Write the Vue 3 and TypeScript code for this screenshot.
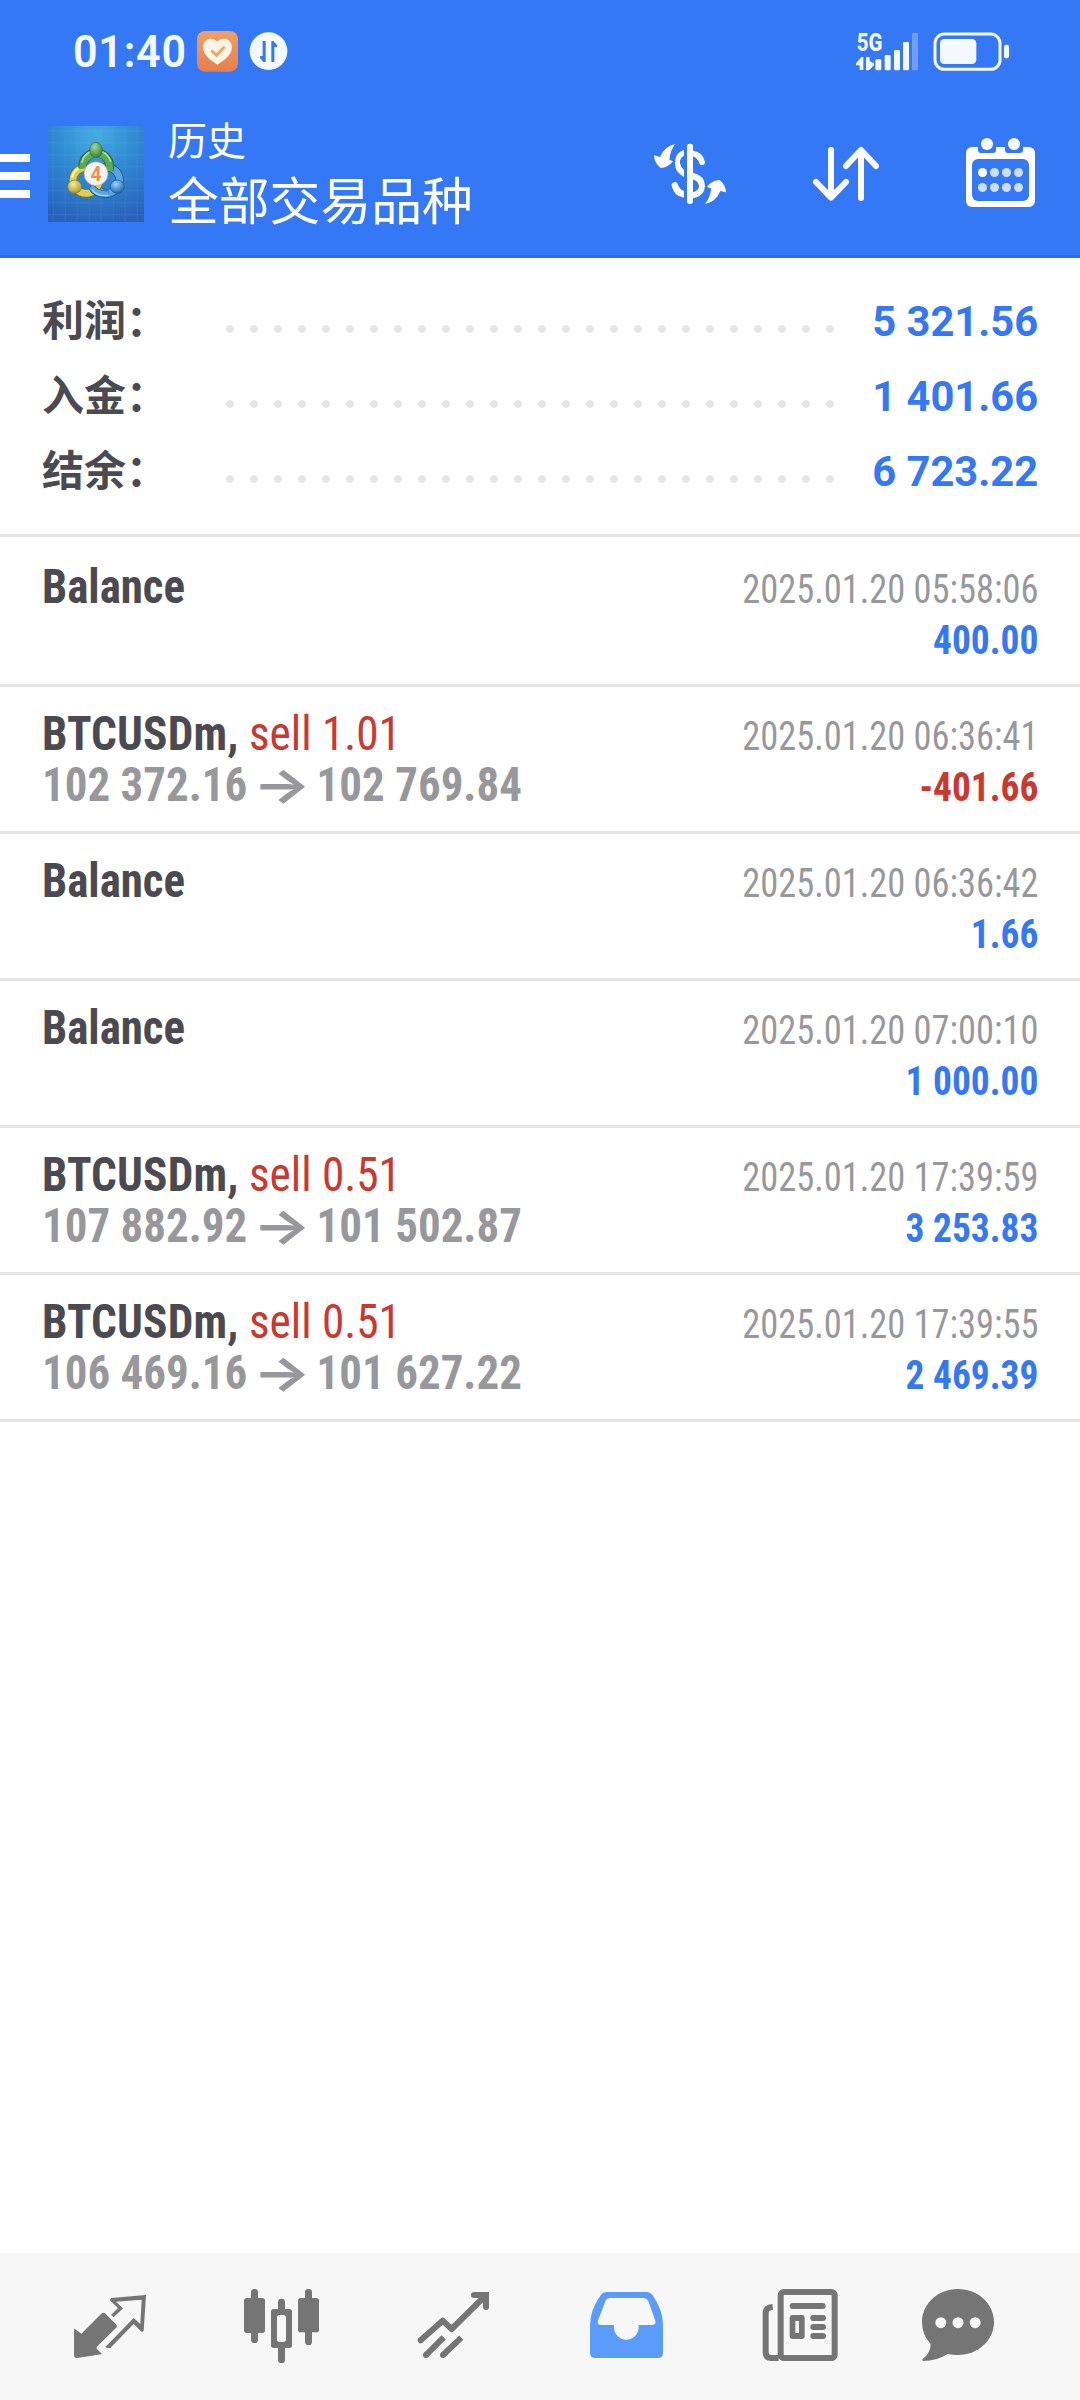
<script setup lang="ts">
interface SummaryLine {
  label: string
  value: string
}

interface HistoryRow {
  title: string
  side?: string
  open?: string
  close?: string
  time: string
  amount: string
  loss?: boolean
}

const summary: SummaryLine[] = [
  { label: '利润：', value: '5 321.56' },
  { label: '入金：', value: '1 401.66' },
  { label: '结余：', value: '6 723.22' },
]

const rows: HistoryRow[] = [
  { title: 'Balance', time: '2025.01.20 05:58:06', amount: '400.00' },
  { title: 'BTCUSDm,', side: 'sell 1.01', open: '102 372.16', close: '102 769.84', time: '2025.01.20 06:36:41', amount: '-401.66', loss: true },
  { title: 'Balance', time: '2025.01.20 06:36:42', amount: '1.66' },
  { title: 'Balance', time: '2025.01.20 07:00:10', amount: '1 000.00' },
  { title: 'BTCUSDm,', side: 'sell 0.51', open: '107 882.92', close: '101 502.87', time: '2025.01.20 17:39:59', amount: '3 253.83' },
  { title: 'BTCUSDm,', side: 'sell 0.51', open: '106 469.16', close: '101 627.22', time: '2025.01.20 17:39:55', amount: '2 469.39' },
]
</script>

<template>
  <div class="screen">
    <header class="top">
      <div class="status">
        <span class="clock">01:40</span>
        <svg class="heart" width="41" height="41" viewBox="591 93 123 123">
          <defs>
            <linearGradient id="orange" x1="0" y1="0" x2="0" y2="1">
              <stop offset="0" stop-color="#efa066" />
              <stop offset="1" stop-color="#e67f4b" />
            </linearGradient>
          </defs>
          <rect x="591" y="93" width="123" height="122" rx="24" fill="url(#orange)" />
          <path d="M652 194C640 186 609 168 609 142C609 116 640 108 652 126C664 108 696 116 696 142C696 168 664 186 652 194Z" fill="#fff4e6" />
          <path d="M637 154L650 166L671 143" fill="none" stroke="#eda869" stroke-width="9" stroke-linecap="round" />
        </svg>
        <svg class="sync" width="39" height="39" viewBox="747 96 117 117">
          <circle cx="805.500" cy="153.500" r="56.500" fill="#f4f8ff" />
          <path d="M788 123H797V186H790L780 174V168H788ZM814 186V123H820L831 135V141H823V186Z" fill="#3478f6" />
        </svg>
        <svg class="signal" width="64" height="40" viewBox="105 60 192 120">
          <text x="110" y="121" class="net" textLength="77" lengthAdjust="spacingAndGlyphs">5G</text>
          <g fill="#f4f8ff">
            <path d="M130 138V177H119V163H108V157L124 138ZM138 138H149V150L162 157V163L147 178H138Z" />
            <rect x="166" y="145" width="18" height="33" rx="4" />
            <rect x="194" y="132" width="18" height="46" rx="4" />
            <rect x="222" y="117" width="18" height="61" rx="4" />
            <rect x="249" y="93" width="18" height="85" rx="4" />
            <rect x="276" y="65" width="18" height="113" rx="4" opacity=".3" />
          </g>
        </svg>
        <svg width="77" height="40" viewBox="339 60 231 120">
          <rect x="345" y="69" width="195" height="106" rx="28" fill="none" stroke="#f4f8ff" stroke-width="9" />
          <rect x="360" y="84" width="109" height="75" rx="13" fill="#f4f8ff" />
          <rect x="552" y="101" width="15" height="41" rx="6" fill="#f4f8ff" />
        </svg>
      </div>

      <div class="bar">
        <svg class="burger" width="30" height="44" viewBox="0 0 30 44" fill="#fff">
          <rect width="30" height="8" />
          <rect y="18" width="30" height="8" />
          <rect y="36" width="30" height="8" />
        </svg>
        <svg class="logo" width="96" height="96" viewBox="144 378 288 288">
          <defs>
            <radialGradient id="sky" cx=".5" cy=".08" r=".95">
              <stop offset="0" stop-color="#45abe2" />
              <stop offset=".5" stop-color="#2f86d0" />
              <stop offset="1" stop-color="#2862b8" />
            </radialGradient>
            <pattern id="mesh" x="158" y="391" width="36" height="36" patternUnits="userSpaceOnUse">
              <path d="M0 1H36M1 0V36" stroke="#7cc4ee" stroke-opacity=".18" stroke-width="2" />
            </pattern>
            <radialGradient id="green" cx=".4" cy=".3" r=".7">
              <stop offset="0" stop-color="#a5d992" />
              <stop offset="1" stop-color="#34853a" />
            </radialGradient>
            <radialGradient id="yellow" cx=".4" cy=".3" r=".7">
              <stop offset="0" stop-color="#f6ec98" />
              <stop offset="1" stop-color="#a9982b" />
            </radialGradient>
            <radialGradient id="azure" cx=".4" cy=".3" r=".7">
              <stop offset="0" stop-color="#a3d6f5" />
              <stop offset="1" stop-color="#1c66b0" />
            </radialGradient>
          </defs>
          <rect x="144" y="378" width="288" height="288" fill="url(#sky)" />
          <rect x="144" y="378" width="288" height="288" fill="url(#mesh)" />
          <g fill="none">
            <circle cx="320" cy="541" r="39" stroke="#1b5594" stroke-width="25" />
            <circle cx="320" cy="541" r="39" stroke="#5aa6de" stroke-width="20" />
            <circle cx="258" cy="541" r="39" stroke="#82741d" stroke-width="25" />
            <circle cx="258" cy="541" r="39" stroke="#e0d052" stroke-width="20" />
            <path d="M216 532A42 42 0 0 1 252 499" stroke="#fbf5b5" stroke-width="6" />
            <path d="M249 504A40 40 0 1 1 327 510" stroke="#2a6b30" stroke-width="27" />
            <path d="M249 506A40 40 0 1 1 327 512" stroke="#5cab54" stroke-width="21" />
            <path d="M246 488A46 46 0 0 1 270 455M307 455A46 46 0 0 1 332 485" stroke="#b5dfa6" stroke-width="5" />
            <path d="M274 560Q288 585 326 582" stroke="#1b5594" stroke-width="22" />
            <path d="M274 560Q288 585 326 582" stroke="#5aa6de" stroke-width="17" />
            <path d="M276 568Q292 591 326 586" stroke="#b4dcf4" stroke-width="4" />
          </g>
          <ellipse cx="288" cy="450" rx="19" ry="23" fill="url(#green)" stroke="#2f7335" stroke-width="2" />
          <ellipse cx="224" cy="560" rx="21" ry="20" fill="url(#yellow)" stroke="#85771d" stroke-width="2" />
          <ellipse cx="352" cy="560" rx="21" ry="20" fill="url(#azure)" stroke="#1b5c9e" stroke-width="2" />
          <circle cx="288" cy="521" r="36" fill="#f2f2f4" stroke="#9c9c92" stroke-width="2" />
          <text x="288" y="542" class="four">4</text>
        </svg>
        <div class="titles">
          <div class="section">历史</div>
          <div class="filter">全部交易品种</div>
        </div>
        <div class="actions">
          <svg width="74" height="71" viewBox="39 51 222 213" fill="#fff">
            <rect x="141" y="71" width="18" height="181" rx="8" />
            <path d="M132 90V107Q118 114 120 130Q122 143 132 150V171Q105 158 105 130Q105 98 132 90Z" />
            <path d="M159 92Q188 96 194 123A8.500 8.500 0 0 1 178 130Q172 113 159 109Z" />
            <path d="M159 158Q195 167 195 198Q193 229 159 235V217Q177 211 177 198Q176 184 159 178Z" />
            <path d="M132 233Q102 228 96 200A9 9 0 0 1 113 192Q118 208 132 213Z" />
            <path d="M105 72Q91 91 88 119L99 124Q84 143 62 144Q43 130 42 106L60 111Q73 79 105 72Z" />
            <path d="M195 252Q210 232 214 206L201 200Q218 180 239 180Q258 197 258 217L241 213Q228 246 195 252Z" />
          </svg>
          <svg width="68" height="71" viewBox="516 51 204 213" fill="none" stroke="#fff" stroke-width="18" stroke-linecap="round" stroke-linejoin="round">
            <path d="M573 90V232M528 186L573 233L618 186" />
            <path d="M663 234V91M618 138L663 90L708 138" />
          </svg>
          <svg width="71" height="71" viewBox="975 51 213 213">
            <rect x="978" y="81" width="207" height="180" rx="18" fill="#fff" />
            <path d="M1014 81H1068V90Q1068 99 1059 99H1023Q1014 99 1014 90ZM1095 81H1149V90Q1149 99 1140 99H1104Q1095 99 1095 90Z" fill="#3478f6" />
            <rect x="996" y="117" width="171" height="126" rx="18" fill="#3478f6" />
            <circle cx="1041" cy="72" r="18" fill="#fff" />
            <circle cx="1122" cy="72" r="18" fill="#fff" />
            <circle cx="1027.500" cy="157.500" r="13.500" fill="#fff" />
            <g fill="#cddffd">
              <circle v-for="n in 3" :key="'a' + n" :cx="1027.5 + n * 36" cy="157.500" r="13.500" />
              <circle v-for="n in 4" :key="'b' + n" :cx="991.5 + n * 36" cy="202.500" r="13.500" />
            </g>
          </svg>
        </div>
      </div>
    </header>

    <section class="summary">
      <div v-for="line in summary" :key="line.label" class="sum-line">
        <span class="sum-label">{{ line.label }}</span>
        <span class="leader"></span>
        <span class="sum-value">{{ line.value }}</span>
      </div>
    </section>

    <main class="history">
      <article v-for="row in rows" :key="row.time" class="row">
        <div class="left">
          <div class="line" :class="{ trade: row.side }"><b>{{ row.title }}</b><span v-if="row.side" class="side">{{ ' ' + row.side }}</span></div>
          <div v-if="row.open" class="prices"><span>{{ row.open }}</span><span class="arrow">→</span><span>{{ row.close }}</span></div>
        </div>
        <div class="right">
          <div class="time">{{ row.time }}</div>
          <div class="amount" :class="{ loss: row.loss }">{{ row.amount }}</div>
        </div>
      </article>
    </main>

    <nav class="tabs">
      <svg width="74" height="76" viewBox="219 144 222 228">
        <path d="M315 220Q309 216 303 222L244 281L224 266H222V346Q222 354 231 354L304 343V340L290 326V321L350 262Q352 258 348 253Z" fill="#757575" />
        <path d="M316 321L322 324H331L401 252L422 273Q427 277 431 273L438 165L334 174Q328 177 331 182L354 204L333 225L341 232L369 205L348 185L425 179L421 252L401 234Z" fill="#757575" />
      </svg>
      <svg width="77" height="76" viewBox="729 144 231 228" fill="#757575">
        <rect x="753" y="147" width="21" height="162" rx="10" />
        <rect x="732" y="174" width="63" height="105" rx="8" />
        <rect x="915" y="147" width="21" height="168" rx="10" />
        <rect x="894" y="174" width="63" height="103" rx="8" />
        <rect x="834" y="176" width="21" height="193" rx="10" />
        <rect x="813" y="207" width="63" height="117" rx="8" />
        <rect x="831" y="225" width="27" height="81" rx="8" fill="#f7f7f7" />
      </svg>
      <svg width="73" height="76" viewBox="171 144 219 228" fill="none" stroke="#757575" stroke-width="18">
        <path d="M182 301L248 242L275 267L376 167" stroke-linecap="round" stroke-linejoin="round" />
        <path d="M342 165H378V201" stroke-linecap="round" />
        <path d="M369 156H380Q387 156 387 163V174H369Z" fill="#757575" stroke="none" />
        <path d="M251 292L198 345M304 293L249 345" />
        <circle cx="198" cy="345" r="9" fill="#757575" stroke="none" />
        <circle cx="249" cy="345" r="9" fill="#757575" stroke="none" />
      </svg>
      <svg width="75" height="76" viewBox="687 144 225 228">
        <path fill-rule="evenodd" d="M739 156H861Q871 156 877 164Q909 210 909 254V339Q909 354 894 354H705Q690 354 690 339V254Q690 210 723 164Q729 156 739 156ZM750 174Q740 174 736 184L714 242Q711 255 724 255H762V262A37 37 0 0 0 836 262V255H876Q888 255 886 242L865 184Q860 174 848 174Z" fill="#5b9bfa" />
      </svg>
      <svg width="78" height="76" viewBox="123 144 234 228">
        <rect x="182" y="156" width="162" height="198" rx="10" fill="none" stroke="#757575" stroke-width="18" />
        <path d="M158 201Q137 202 137 219V337Q137 354 154 354H176" fill="none" stroke="#757575" stroke-width="18" />
        <g fill="#757575">
          <rect x="209" y="189" width="108" height="18" rx="9" />
          <rect x="209" y="225" width="45" height="72" rx="9" />
          <rect x="271" y="225" width="47" height="18" rx="9" />
          <rect x="271" y="252" width="47" height="18" rx="9" />
          <rect x="271" y="279" width="47" height="18" rx="9" />
        </g>
        <rect x="226" y="243" width="11" height="36" fill="#f7f7f7" />
      </svg>
      <svg width="74" height="76" viewBox="603 144 222 228">
        <path d="M714 147C774 147 822 191 822 246C822 301 774 345 714 345Q698 345 683 342Q650 363 610 363Q604 361 608 357Q632 340 632 312Q606 284 606 246C606 191 654 147 714 147Z" fill="#757575" />
        <g fill="#f7f7f7">
          <circle cx="662.500" cy="248" r="16.500" />
          <circle cx="714" cy="248" r="16.500" />
          <circle cx="765.500" cy="248" r="16.500" />
        </g>
      </svg>
    </nav>
  </div>
</template>

<style>
body {
  margin: 0;
  background: #fff;
}
</style>

<style scoped>
.screen {
  width: 1080px;
  height: 2400px;
  display: flex;
  flex-direction: column;
  background: #fff;
  overflow: hidden;
  font-family: Roboto, 'Noto Sans CJK SC', sans-serif;
}
svg {
  display: block;
  flex: none;
}
.top {
  height: 255px;
  flex: none;
  background: #3478f6;
  border-bottom: 3px solid #2f6bdc;
}
.status {
  height: 71px;
  padding: 31px 70px 0 73px;
  display: flex;
  align-items: flex-start;
}
.clock {
  width: 124px;
  font-size: 45px;
  line-height: 41px;
  font-weight: 600;
  letter-spacing: 0.8px;
  color: #f4f8ff;
  transform: scaleX(0.955);
  transform-origin: left;
}
.sync {
  margin: 1px auto 0 11px;
}
.signal {
  margin-right: 14px;
  overflow: visible;
}
.net {
  font: 800 77px Roboto, sans-serif;
  fill: #f4f8ff;
}
.bar {
  display: flex;
  align-items: flex-start;
}
.burger {
  margin-top: 52px;
}
.logo {
  margin: 24px 24px 0 18px;
}
.four {
  font: 700 58px Roboto, sans-serif;
  fill: #ef9540;
  text-anchor: middle;
}
.titles {
  margin-top: 15px;
  color: #fff;
  white-space: nowrap;
}
.section {
  font-size: 39px;
  line-height: 50px;
}
.filter {
  font-size: 50.8px;
  line-height: 71px;
}
.actions {
  display: flex;
  gap: 85px;
  margin: 35px 44px 0 auto;
}
.summary {
  flex: none;
  padding: 26px 42px 25px;
  border-bottom: 3px solid #e5e5e5;
}
.sum-line {
  height: 75px;
  display: flex;
  font-size: 42px;
  line-height: 75px;
  font-weight: 700;
}
.sum-label {
  width: 176px;
  color: #4b4a50;
}
.leader {
  width: 624px;
  background: radial-gradient(circle at 12px 45px, #e5e5e5 3.5px, transparent 4.3px) 0 0 / 24px 75px;
}
.sum-value {
  margin-left: auto;
  color: #3478f6;
  transform: scaleX(0.993);
  transform-origin: right;
}
.history {
  flex: 1;
  font-family: 'Roboto Condensed', Roboto, sans-serif;
}
.row {
  height: 144px;
  padding: 0 42px;
  display: flex;
  justify-content: space-between;
  border-bottom: 3px solid #e5e5e5;
  white-space: pre;
}
.row:first-child {
  padding-top: 3px;
}
.left {
  padding-top: 21px;
  font-size: 48px;
  line-height: 51px;
  color: #4b4a50;
}
.line {
  transform: scaleX(0.935);
  transform-origin: left;
}
.line.trade {
  transform: scaleX(0.943);
}
.trade b {
  letter-spacing: 0.2px;
}
.side {
  color: #cc372e;
}
.prices {
  display: flex;
  height: 51px;
  font-weight: 700;
  color: #98989c;
  transform: scaleX(0.937);
  transform-origin: left;
}
.arrow {
  width: 74px;
  text-align: center;
  font-family: Inter, sans-serif;
  transform: scaleX(1.36);
}
.right {
  padding-top: 24px;
  font-size: 40px;
  line-height: 51px;
  text-align: right;
}
.time {
  color: #98989c;
  transform: scaleX(0.91);
  transform-origin: right;
}
.amount {
  font-weight: 700;
  color: #3478f6;
  transform: scaleX(0.935);
  transform-origin: right;
}
.amount.loss {
  color: #cc372e;
}
.tabs {
  height: 147px;
  flex: none;
  box-sizing: border-box;
  padding: 35px 0 0 73px;
  display: grid;
  grid-template-columns: 170px 174px 172px 172px 160px 1fr;
  background: #f7f7f7;
}
</style>
